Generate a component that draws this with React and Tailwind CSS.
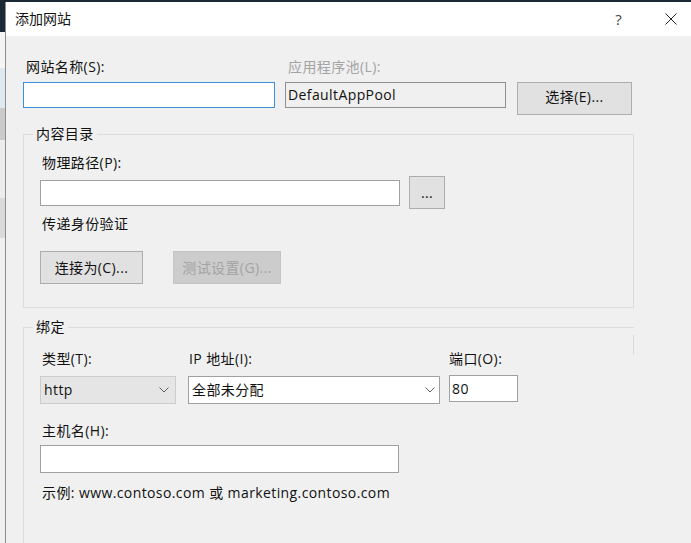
import React from 'react'

const FONT = "font-['Open_Sans','Noto_Sans_CJK_SC',sans-serif]"

function Chevron() {
  return (
    <svg width="10" height="6" viewBox="0 0 10 6" className="shrink-0">
      <path d="M0.5 0.5 L5 5 L9.5 0.5" fill="none" stroke="#606060" strokeWidth="1" />
    </svg>
  )
}

function Btn({ children, className = '', disabled = false }) {
  return (
    <div
      className={
        'flex items-center justify-center h-[33px] border ' +
        (disabled
          ? 'bg-[#cccccc] border-[#c4c4c4] text-[#a3a3a3] '
          : 'bg-[#e1e1e1] border-[#adadad] text-[#111] ') +
        className
      }
    >
      {children}
    </div>
  )
}

export default function App() {
  return (
    <div className={`w-[691px] h-[543px] overflow-hidden flex bg-[#1b2836] text-[14px] leading-[18px] tracking-[0.4px] text-[#111] ${FONT}`}>
      {/* window behind the dialog */}
      <div className="w-[5px] flex flex-col pt-[32px] shrink-0">
        <div className="h-[36px] bg-[#f5f5f5]" />
        <div className="h-[40px] bg-[#dfe7ef]" />
        <div className="h-[32px] bg-[#cacaca]" />
        <div className="h-[58px] bg-[#ececec]" />
        <div className="h-[40px] bg-[#dadada]" />
        <div className="flex-1 bg-[#f0f0f0]" />
      </div>

      {/* dialog */}
      <div className="flex-1 flex flex-col mt-[2px] border-l border-[#8c8c8c]">
        <div className="h-[34px] bg-white flex items-center pl-[9px] pr-[14px] shrink-0">
          <span className="text-[14px] tracking-normal text-[#111]">添加网站</span>
          <span className="ml-auto text-[15px] text-[#444] mr-[43px]">?</span>
          <svg width="12" height="12" viewBox="0 0 12 12">
            <path d="M0.5 0.5 L11.5 11.5 M11.5 0.5 L0.5 11.5" stroke="#222" strokeWidth="1" />
          </svg>
        </div>

        <div className="flex-1 bg-[#f0f0f0] pl-[17px] pt-[22px]">
          {/* site name / app pool */}
          <div className="flex items-start">
            <div className="flex flex-col w-[252px]">
              <span className="pl-[3px] h-[18px]">网站名称(S):</span>
              <div className="mt-[6px] h-[26px] bg-white border border-[#3d8fdc]" />
            </div>
            <div className="flex flex-col w-[221px] ml-[10px]">
              <span className="pl-[3px] h-[18px] text-[#a3a3a3]">应用程序池(L):</span>
              <div className="mt-[6px] h-[26px] border border-[#8f8f8f] flex items-center pl-[2px]">
                DefaultAppPool
              </div>
            </div>
            <div className="flex flex-col ml-[11px]">
              <span className="h-[18px]" />
              <Btn className="mt-[6px] w-[115px] h-[32px] pb-[3px]">选择(E)...</Btn>
            </div>
          </div>

          {/* content directory */}
          <fieldset className="mt-[10px] w-[611px] border border-[#dcdcdc] pl-[16px] pb-[23px] pt-[11px]">
            <legend className="ml-[-7px] px-[3px] h-[18px]">内容目录</legend>
            <span className="pl-[2px] block h-[18px]">物理路径(P):</span>
            <div className="mt-[4px] flex items-center">
              <div className="w-[360px] h-[26px] bg-white border border-[#a0a0a0]" />
              <Btn className="ml-[9px] w-[36px] text-[#3a3a60] leading-[12px]">...</Btn>
            </div>
            <span className="pl-[2px] mt-[6px] block h-[18px]">传递身份验证</span>
            <div className="mt-[18px] flex">
              <Btn className="w-[103px]">连接为(C)...</Btn>
              <Btn className="ml-[30px] w-[108px]" disabled>测试设置(G)...</Btn>
            </div>
          </fieldset>

          {/* binding */}
          <fieldset className="relative mt-[10px] w-[611px] border-l border-t border-[#dcdcdc] pl-[16px] pt-[14px] min-h-[300px]">
            <legend className="ml-[-7px] px-[3px] h-[18px]">绑定</legend>
            <div className="absolute right-0 top-[-1px] w-px h-[20px] bg-[#dcdcdc]" />
            <div className="flex items-start">
              <div className="flex flex-col w-[136px]">
                <span className="pl-[2px] h-[18px]">类型(T):</span>
                <div className="mt-[8px] h-[28px] bg-[#e5e5e5] border border-[#cccccc] flex items-center pl-[3px] pr-[6px]">
                  <span>http</span>
                  <span className="ml-auto"><Chevron /></span>
                </div>
              </div>
              <div className="flex flex-col w-[252px] ml-[12px]">
                <span className="pl-[1px] h-[18px]">IP 地址(I):</span>
                <div className="mt-[8px] h-[28px] bg-white border border-[#a0a0a0] flex items-center pl-[3px] pr-[4px]">
                  <span>全部未分配</span>
                  <span className="ml-auto"><Chevron /></span>
                </div>
              </div>
              <div className="flex flex-col w-[69px] ml-[9px]">
                <span className="h-[18px]">端口(O):</span>
                <div className="mt-[7px] h-[27px] bg-white border border-[#a0a0a0] flex items-center pl-[2px]">80</div>
              </div>
            </div>
            <span className="pl-[2px] mt-[18px] block h-[18px]">主机名(H):</span>
            <div className="mt-[5px] w-[359px] h-[28px] bg-white border border-[#a0a0a0]" />
            <span className="pl-[2px] mt-[11px] block h-[18px]">示例: www.contoso.com 或 marketing.contoso.com</span>
          </fieldset>
        </div>
      </div>
    </div>
  )
}
